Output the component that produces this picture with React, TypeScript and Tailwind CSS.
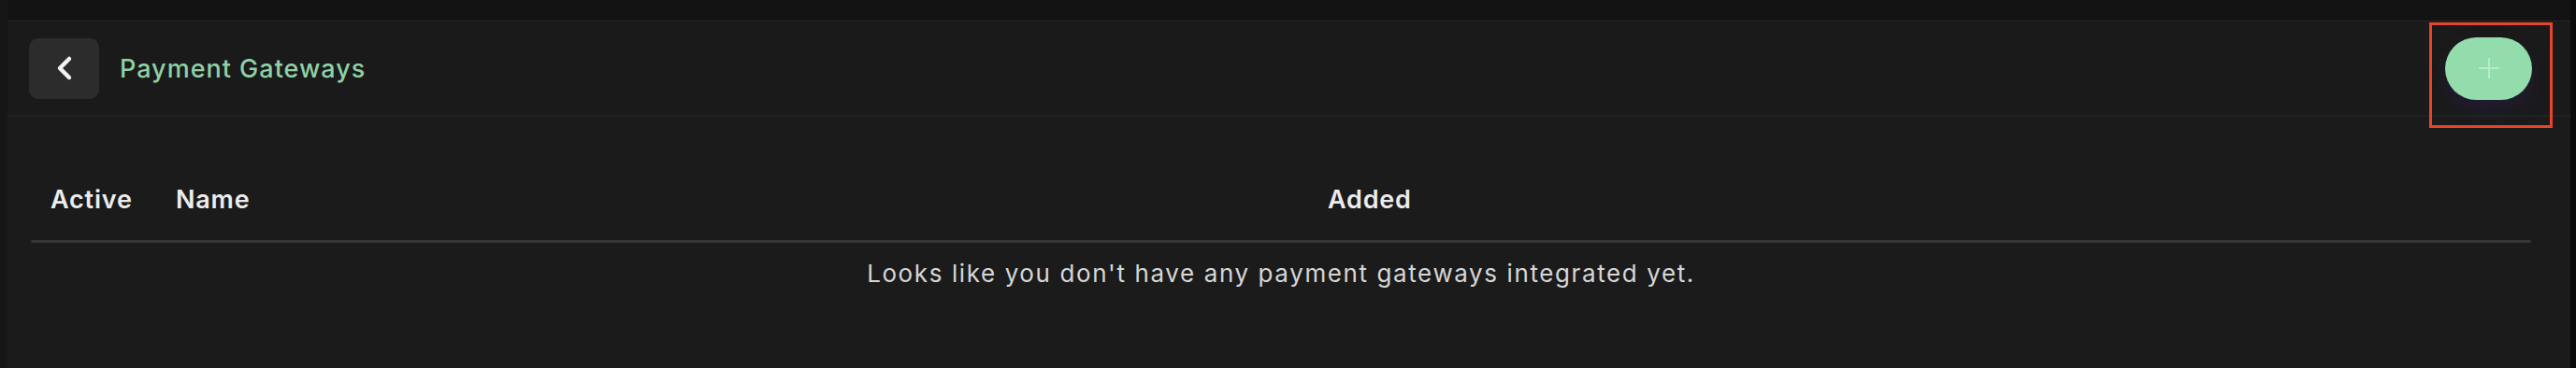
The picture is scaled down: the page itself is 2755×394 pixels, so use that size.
import React from "react";

function BackButton() {
  return (
    <button className="flex h-[65px] w-[75px] items-center justify-center rounded-[10px] bg-[#2c2c2c]">
      <svg width="22" height="28" viewBox="0 0 22 28" fill="none">
        <path d="M16 4 L6 14 L16 24" stroke="#f2f2f2" strokeWidth="4.5" strokeLinecap="round" strokeLinejoin="round" />
      </svg>
    </button>
  );
}

function AddButton() {
  return (
    <div className="relative">
      <button className="flex h-[67px] w-[93px] items-center justify-center rounded-full bg-[#93dcab] shadow-[0_10px_18px_rgba(40,30,70,0.55)]">
        <svg width="24" height="24" viewBox="0 0 24 24" fill="none">
          <path d="M12 1 V23 M1 12 H23" stroke="#b9ebc9" strokeWidth="2" />
        </svg>
      </button>
      {/* highlight box drawn over the button */}
      <div className="pointer-events-none absolute left-[-17px] top-[-16px] h-[113px] w-[132px] border-[3px] border-[#e8442b]" />
    </div>
  );
}

export default function App() {
  const headers = ["Active", "Name", "Added"];
  return (
    <div
      className="flex h-[394px] w-full bg-[#1b1b1b] text-[#e6e6e6]"
      style={{ fontFamily: "Inter, 'Noto Sans', sans-serif" }}
    >
      <div className="w-[8px] bg-[#161616]" />
      <div className="flex flex-1 flex-col">
        <div className="h-[23px] border-b border-[#262626] bg-[#131313]" />
        <div className="flex h-[102px] items-center justify-between border-b-2 border-[#222222] bg-[#1a1a1a] pl-[23px] pr-[41px]">
          <div className="flex items-center gap-[22px]">
            <BackButton />
            <span className="pt-[2px] text-[27px] font-medium tracking-[1px] text-[#8fd1a5]">Payment Gateways</span>
          </div>
          <AddButton />
        </div>
        <div className="pl-[25px] pr-[42px] pt-[62px]">
          <div className="flex h-[70px] items-center pl-[21px] pb-[16px] text-[27px] font-semibold tracking-[0.8px] text-[#ececec]">
            <span className="w-[134px]">{headers[0]}</span>
            <span className="w-[1232px]">{headers[1]}</span>
            <span>{headers[2]}</span>
          </div>
          <div className="h-[3px] w-full rounded-full bg-[#363636]" />
          <p className="pt-[13px] text-center text-[26px] tracking-[1.6px] text-[#d6d6d6]">
            Looks like you don't have any payment gateways integrated yet.
          </p>
        </div>
      </div>
      <div className="w-[6px] bg-[#0a0a0a]" />
    </div>
  );
}
